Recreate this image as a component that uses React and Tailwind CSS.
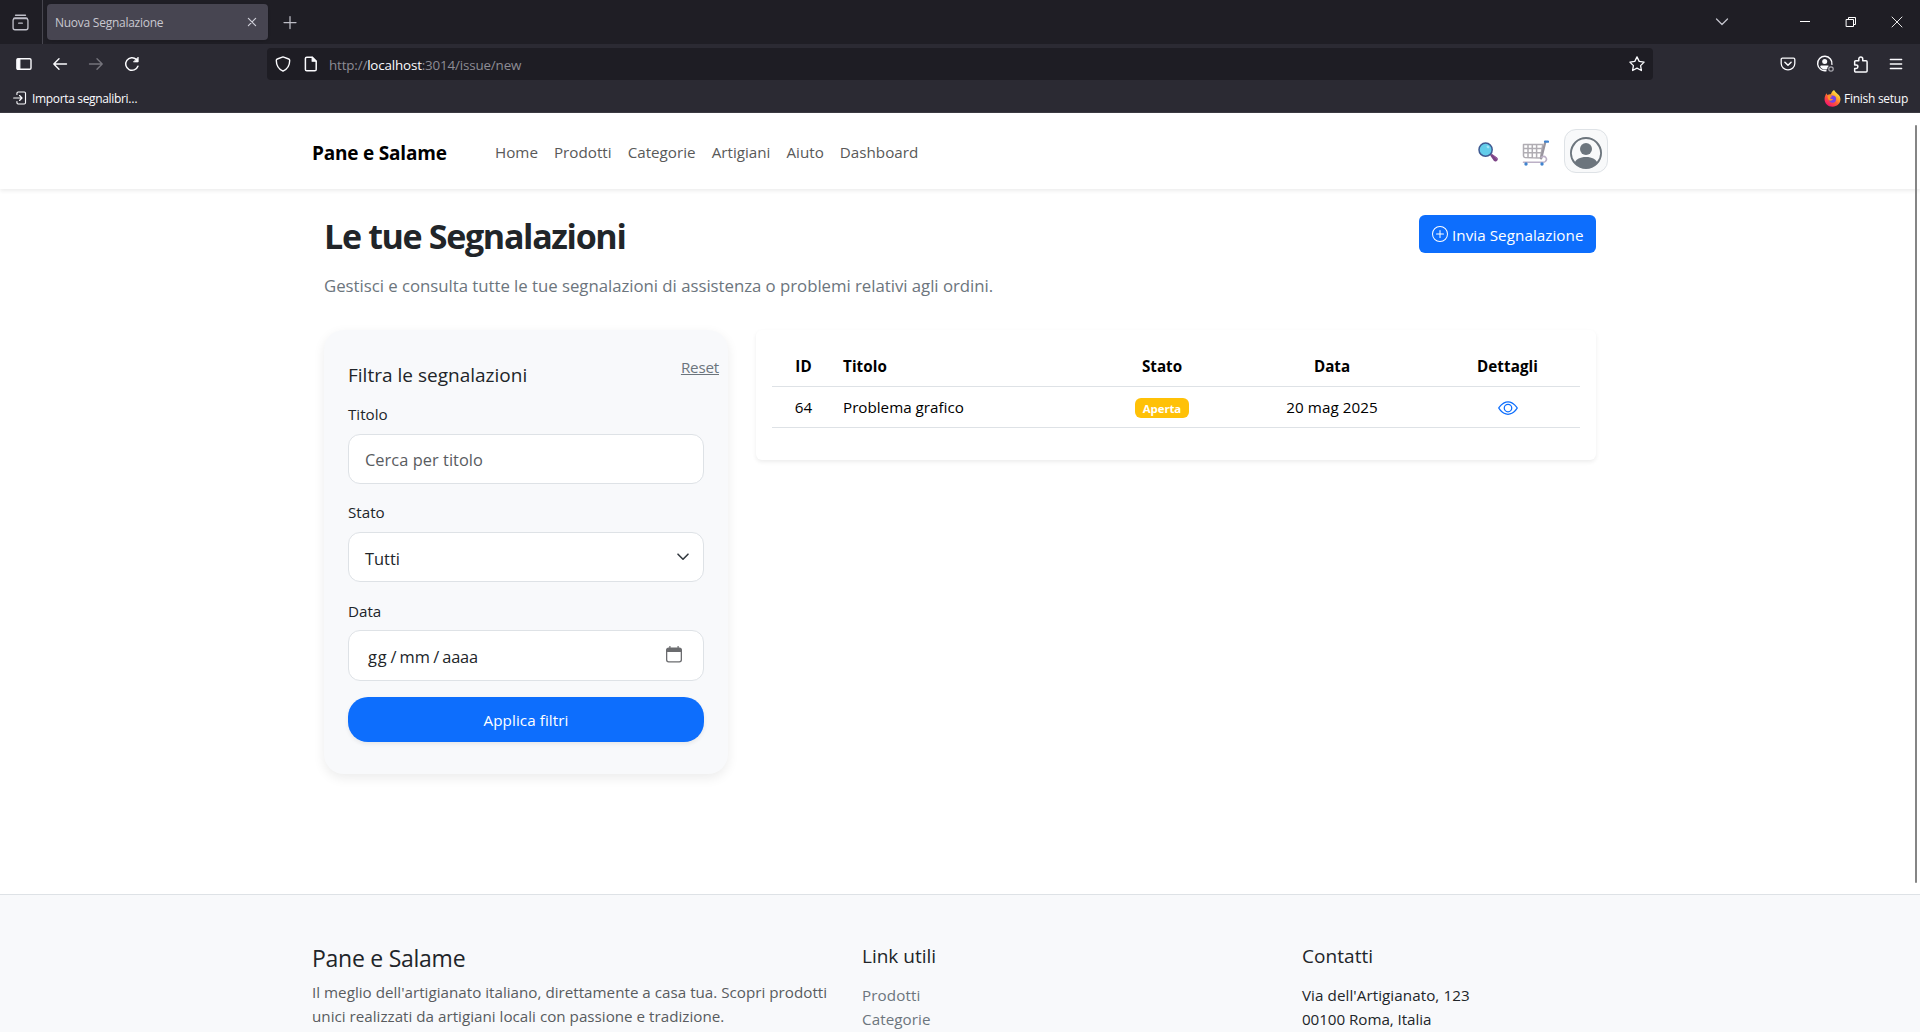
import React from "react";
import { BsEye, BsPersonCircle, BsPlusCircle } from "react-icons/bs";

function Svg({ size = 16, className = "", children }) {
  return (
    <svg
      width={size}
      height={size}
      viewBox="0 0 16 16"
      fill="none"
      stroke="currentColor"
      strokeWidth="1.25"
      strokeLinecap="round"
      strokeLinejoin="round"
      className={`block shrink-0 ${className}`}
    >
      {children}
    </svg>
  );
}

function ToolButton({ className = "text-[#fbfbfe]", children }) {
  return <button className={`flex h-8 w-9 items-center justify-center ${className}`}>{children}</button>;
}

function FirefoxLogo() {
  return (
    <svg width="17" height="17" viewBox="0 0 32 32" className="block shrink-0">
      <defs>
        <linearGradient id="flame" x1="0.85" y1="0.1" x2="0.25" y2="0.95">
          <stop offset="0" stopColor="#fff44f" />
          <stop offset="0.3" stopColor="#ffb02e" />
          <stop offset="0.6" stopColor="#ff5a36" />
          <stop offset="1" stopColor="#f5156c" />
        </linearGradient>
      </defs>
      <path
        d="M19 0c1 3 4 5 6.500 7.500C29 10 31 13.500 31 17.500 31 25.500 24.500 31.500 16 31.500S1 25.500 1 17c0-4 1.500-8 4-11 .2 1.500.8 2.500 1.500 3.200C8.500 8 11 7.500 13 8c1-3.500 3-6.500 6-8z"
        fill="url(#flame)"
      />
      <circle cx="16" cy="17" r="6.800" fill="#7542e5" />
      <path d="M7 11c3-1.500 6-.5 8 2-2 .3-3.500 1-3.500 2.500 1.500 2 4 2 5.500 1-1 4.500-8 5-9.500 0C7 14.500 6.500 12.500 7 11z" fill="#ff9328" />
    </svg>
  );
}

function TabBar() {
  return (
    <div className="flex h-11 items-center bg-[#1f1e25] text-[#bfbfc9]">
      <div className="flex h-full w-[40px] items-center justify-center">
        <Svg size={17}>
          <path d="M3.300 1.200h9.400M1.600 4.200c.2-.5.700-.6 1.300-.6h10.200c.6 0 1.100.1 1.300.6" />
          <rect x="1" y="4.300" width="14" height="10.500" rx="1.800" />
          <path d="M6.300 8.600h3.400" />
        </Svg>
      </div>
      <div className="h-full w-[3px] border-r border-[#47464f]" />
      <div className="ml-1 flex h-9 w-[221px] items-center justify-between rounded bg-[#474551] pl-2 pr-[10px] shadow-sm">
        <span className="pt-px text-[12px] leading-4 tracking-[-0.26px] text-[#c9c8d0]">Nuova Segnalazione</span>
        <Svg size={12} className="text-[#cfcfd8]">
          <path strokeWidth="1.600" d="M3.200 3.200l9.600 9.600M12.800 3.200L3.200 12.800" />
        </Svg>
      </div>
      <Svg size={16} className="ml-[13.5px] text-[#bdbdc6]">
        <path d="M8 2.500v12M2 8.500h12" />
      </Svg>
      <div className="ml-auto flex items-center">
        <Svg size={16} className="mr-[67px] text-[#c2c2cb]">
          <path strokeWidth="1.300" d="M2.500 5L8 10.500 13.500 5" />
        </Svg>
        <Svg size={16} className="mr-[30px] text-white">
          <path strokeWidth="1" strokeLinecap="butt" d="M3 7.500h10" />
        </Svg>
        <Svg size={16} className="mr-[30px] text-white">
          <path strokeWidth="1" strokeLinejoin="miter" d="M3.500 5.500h7v7h-7zM5.500 5.500v-2h7v7h-2" />
        </Svg>
        <Svg size={16} className="mr-[15px] text-white">
          <path strokeWidth="0.900" d="M3 3l10 10M13 3L3 13" />
        </Svg>
      </div>
    </div>
  );
}

function Toolbar() {
  return (
    <div className="flex h-10 items-center px-1.5">
      <ToolButton>
        <Svg>
          <rect x="1" y="2.700" width="14" height="10.600" rx="1.300" strokeWidth="1.400" />
          <path d="M1.200 3h2.600v10H1.200z" fill="currentColor" />
        </Svg>
      </ToolButton>
      <ToolButton>
        <Svg>
          <path strokeWidth="1.400" d="M14.500 8H1.800M7 2.800L1.800 8 7 13.200" />
        </Svg>
      </ToolButton>
      <ToolButton className="text-[#75747c]">
        <Svg>
          <path strokeWidth="1.400" d="M1.500 8h12.700M9 2.800L14.200 8 9 13.200" />
        </Svg>
      </ToolButton>
      <ToolButton>
        <Svg>
          <path strokeWidth="1.500" d="M13.900 10.200A6.300 6.300 0 1 1 12.300 3.400" />
          <path d="M14.200 1.500v4.400H9.800z" fill="currentColor" strokeWidth="0.800" />
        </Svg>
      </ToolButton>
      <div className="ml-[117px] flex h-8 w-[1386px] items-center rounded bg-[#1e1d24] px-2 text-[#fbfbfe]">
        <Svg>
          <path strokeWidth="1.400" d="M8 .9l5.700 2.100c.7.2 1 .7 1 1.400 0 4.500-2 8.400-6.700 10.700C3.300 12.800 1.300 8.900 1.300 4.400c0-.7.3-1.200 1-1.400z" />
        </Svg>
        <Svg className="ml-3">
          <path strokeWidth="1.500" d="M3.800 1.200h5.400l4 4v8.200a1.400 1.400 0 0 1-1.400 1.400h-8a1.400 1.400 0 0 1-1.400-1.400V2.600a1.400 1.400 0 0 1 1.400-1.400z" />
          <path d="M9.200 1.200v4h4z" fill="currentColor" />
        </Svg>
        <span className="ml-[10px] pt-[2px] text-[13.4px] leading-5 tracking-[-0.165px] text-[#8d8c94]">
          http://<span className="text-[#fbfbfe]">localhost</span>:3014/issue/new
        </span>
        <Svg className="ml-auto">
          <path strokeWidth="1.300" d="M8 .9l2.200 4.500 4.900.7-3.500 3.500.8 4.900L8 12.200l-4.400 2.300.8-4.900L.9 6.100l4.900-.7z" />
        </Svg>
      </div>
      <div className="ml-auto flex">
        <ToolButton>
          <Svg>
            <path strokeWidth="1.300" d="M2.400 2.200h11.200c.7 0 1.200.5 1.200 1.200v4.100a6.800 6.300 0 0 1-13.600 0V3.400c0-.7.500-1.200 1.200-1.200z" />
            <path strokeWidth="1.500" d="M4.900 6.300L8 9.200l3.100-2.900" />
          </Svg>
        </ToolButton>
        <ToolButton>
          <svg width="18" height="18" viewBox="0 0 18 18" fill="none" stroke="currentColor" className="ml-[2px] block shrink-0">
            <path strokeWidth="1.400" d="M15.900 9.800A7.200 7.200 0 1 0 10.500 15.500" />
            <circle cx="8.700" cy="6.500" r="2.500" fill="currentColor" stroke="none" />
            <path d="M4.200 11.700c0-.8.600-1.300 1.400-1.300h6.200c.5 0 .9.200 1.200.6-1.200.7-1.800 1.600-1.700 3-2.500 1.200-5.600.3-7.100-2.300z" fill="currentColor" stroke="none" />
            <circle cx="15" cy="14" r="2.200" strokeWidth="1.200" className="text-[#a9a8b0]" stroke="currentColor" />
          </svg>
        </ToolButton>
        <ToolButton>
          <Svg size={17}>
            <path
              strokeWidth="1.400"
              d="M2.500 6.600V5.400c0-.6.400-1 1-1h2.900V2.800a1.850 1.850 0 0 1 3.700 0v1.600h3.100c.6 0 1 .4 1 1v8.700c0 .6-.4 1-1 1H3.500c-.6 0-1-.4-1-1v-2.400h1.400a1.650 1.650 0 0 0 0-3.300H2.500z"
            />
          </Svg>
        </ToolButton>
        <ToolButton>
          <Svg>
            <path strokeWidth="1.300" d="M2.300 3.500h11.400M2.300 8h11.400M2.300 12.500h11.400" />
          </Svg>
        </ToolButton>
      </div>
    </div>
  );
}

function BookmarksBar() {
  return (
    <div className="flex h-[29px] items-center justify-between border-b border-[#3c3b43] pl-3 pr-3 text-[12px] leading-4 text-[#fbfbfe]">
      <div className="flex items-center gap-[5px]">
        <Svg size={14} className="ml-px">
          <path strokeWidth="1.300" d="M4.500 4V2.600c0-.8.600-1.400 1.400-1.400h7c.8 0 1.400.6 1.400 1.400v10.800c0 .8-.6 1.400-1.400 1.400h-7c-.8 0-1.400-.6-1.400-1.400V12" />
          <path strokeWidth="1.400" d="M.8 8h9.400M7.500 5.200L10.300 8l-2.800 2.800" />
        </Svg>
        <span className="pt-[2px] tracking-[-0.34px]">Importa segnalibri…</span>
      </div>
      <div className="flex items-center gap-[3px]">
        <FirefoxLogo />
        <span className="pt-[2px] tracking-[-0.27px]">Finish setup</span>
      </div>
    </div>
  );
}

function SearchIcon() {
  return (
    <svg width="20" height="20" viewBox="0 0 20 20" className="block">
      <path d="M12.200 13.400l1.600-1.600 5.200 3.700c1 .8 1.100 2 .3 2.900l-.6.600c-.9.800-2.100.7-2.900-.3z" fill="#7d4486" />
      <path d="M13.600 12l5 3.700c.6.500.8 1.100.5 1.800z" fill="#a15fa6" />
      <circle cx="7.600" cy="7.700" r="6.600" fill="#63cdea" stroke="#3f5a92" strokeWidth="1.500" />
      <ellipse cx="10" cy="4.900" rx="1.500" ry="1.200" fill="#a5e6f7" transform="rotate(35 10 4.900)" />
    </svg>
  );
}

function CartIcon() {
  return (
    <svg width="27" height="26" viewBox="0 0 27 26" fill="none" className="block">
      <path
        d="M1.500 4.500h19.300L18.500 18 3 17.500c-1-.1-1.400-.6-1.500-1.500z M1.500 8.500h18.700M1.600 12.800h18M6 4.500v13M10.300 4.500v13M14.600 4.500v13.300"
        stroke="#b0adb3"
        strokeWidth="1.500"
        strokeLinejoin="round"
      />
      <path d="M23.300 2L19.200 18.300" stroke="#99959e" strokeWidth="2.300" strokeLinecap="round" />
      <path d="M19.300 17.300c3.800-2.500 6.800 1.600 4 4.200-.7.600-1.500.8-2.500.8H1.500" stroke="#bcb0c6" strokeWidth="1.600" strokeLinecap="round" />
      <path d="M23 1.600h3" stroke="#3f83cf" strokeWidth="2.200" strokeLinecap="round" />
      <circle cx="4" cy="24" r="1.700" fill="#3f83cf" />
      <circle cx="20" cy="24" r="1.700" fill="#3f83cf" />
    </svg>
  );
}

function Navbar() {
  const links = ["Home", "Prodotti", "Categorie", "Artigiani", "Aiuto", "Dashboard"];
  return (
    <header className="relative h-[76px] shrink-0 bg-white shadow-[0_2px_4px_rgba(0,0,0,0.075)]">
      <div className="mx-auto flex h-full w-[1320px] items-center px-3">
        <a className="w-[183px] pt-[3px] text-[19px] font-bold leading-[30px] tracking-[-0.2px] text-black">Pane e Salame</a>
        <nav className="flex gap-4 pt-px text-[15.2px] leading-6 tracking-[0.01px] text-[#595959]">
          {links.map((label) => (
            <a key={label}>{label}</a>
          ))}
        </nav>
        <div className="ml-auto flex items-center">
          <div className="pt-[2px]">
            <SearchIcon />
          </div>
          <div className="ml-6 mr-[15px] pt-[3px]">
            <CartIcon />
          </div>
          <button className="flex h-11 w-11 items-center justify-center rounded-xl border border-[#dee2e6] bg-[#f8f9fa] pt-1 text-[#6c757d]">
            <BsPersonCircle size={32} />
          </button>
        </div>
      </div>
    </header>
  );
}

function Label({ className = "mb-2", children }) {
  return <label className={`block text-[15.2px] leading-6 ${className}`}>{children}</label>;
}

function FilterCard() {
  return (
    <aside className="w-[404px] rounded-[20px] bg-[#f8f9fb] px-6 pb-8 pt-[33px] shadow-[0_4px_12px_rgba(0,0,0,0.08)]">
      <div className="mb-[15px] flex h-6 items-start justify-between">
        <h2 className="text-[19px] leading-6 tracking-[0.01px]">Filtra le segnalazioni</h2>
        <a className="-mr-[15px] -mt-2 text-[15.2px] leading-6 tracking-[-0.2px] text-[#6c757d] underline">Reset</a>
      </div>
      <Label>Titolo</Label>
      <div className="mb-4 flex h-[50px] items-center rounded-xl border border-[#dee2e6] bg-white px-4 pt-[3px] text-[16.4px] tracking-[0.04px] text-[#595c5f]">
        Cerca per titolo
      </div>
      <Label>Stato</Label>
      <div className="mb-[17px] flex h-[50px] items-center justify-between rounded-xl border border-[#dee2e6] bg-white pl-4 pr-3">
        <span className="pt-[4px] text-[16.4px]">Tutti</span>
        <Svg size={16} className="text-[#343a40]">
          <path strokeWidth="1.600" d="M3 5.200l5 5 5-5" />
        </Svg>
      </div>
      <Label className="mb-[7px]">Data</Label>
      <div className="flex h-[51px] items-center justify-between rounded-xl border border-[#dee2e6] bg-white pl-[19px] pr-[21px]">
        <div className="flex gap-[3px] pt-[4px] text-[16.4px]">
          <span className="tracking-[0.8px]">gg</span>
          <span>/</span>
          <span className="tracking-[0.2px]">mm</span>
          <span>/</span>
          <span className="tracking-[-0.15px]">aaaa</span>
        </div>
        <svg width="16" height="17" viewBox="0 0 16 17" className="mb-[3px] block text-[#6b6c6f]">
          <path d="M3.300 0h1.200v3H3.300zM11.500 0h1.200v3h-1.200z" fill="currentColor" />
          <rect x=".65" y="2.200" width="14.700" height="13.600" rx="2" fill="none" stroke="currentColor" strokeWidth="1.300" />
          <path d="M.7 4c0-1.200.8-1.900 2-1.900h10.600c1.200 0 2 .7 2 1.900v2H.7z" fill="currentColor" />
        </svg>
      </div>
      <button className="mt-4 flex h-[45px] w-full items-center justify-center rounded-[20px] bg-[#0d6efd] pt-[2px] text-[15.2px] tracking-[0.08px] text-white shadow-[0_2px_4px_rgba(0,0,0,0.075)]">
        Applica filtri
      </button>
    </aside>
  );
}

function IssuesTable() {
  const cols = "grid grid-cols-[63px_260px_134px_206px_145px] h-[41px] items-center border-b border-[#dee2e6] text-center text-[15.2px] leading-6 text-black";
  return (
    <section className="h-[130px] w-[840px] rounded-md bg-white p-4 shadow-[0_2px_4px_rgba(0,0,0,0.075)]">
      <div className={`${cols} font-bold`}>
        <span>ID</span>
        <span className="px-2 text-left tracking-[0.08px]">Titolo</span>
        <span>Stato</span>
        <span>Data</span>
        <span className="tracking-[0.08px]">Dettagli</span>
      </div>
      <div className={cols}>
        <span>64</span>
        <span className="px-2 text-left">Problema grafico</span>
        <span className="flex justify-center pt-[2px]">
          <span className="flex h-5 w-[54px] items-center justify-center rounded-md bg-[#ffc107] pt-px text-[11.4px] font-bold leading-none tracking-[-0.08px] text-white">
            Aperta
          </span>
        </span>
        <span className="tracking-[0.08px]">20 mag 2025</span>
        <span className="flex justify-center pt-[2px] text-[#0d6efd]">
          <BsEye size={20} />
        </span>
      </div>
    </section>
  );
}

function Footer() {
  return (
    <footer className="flex-1 overflow-hidden border-t border-[#dee2e6] bg-[#f8f9fb] pt-[49px]">
      <div className="mx-auto flex w-[1320px] pl-3 text-[15.2px] leading-6">
        <div className="w-[550px]">
          <h3 className="mb-[7px] text-[23px] leading-[29px] tracking-[-0.26px]">Pane e Salame</h3>
          <p className="whitespace-nowrap tracking-[0.005px] text-[#595c5f]">
            Il meglio dell'artigianato italiano, direttamente a casa tua. Scopri prodotti
            <br />
            unici realizzati da artigiani locali con passione e tradizione.
          </p>
        </div>
        <div className="w-[440px]">
          <h3 className="mb-[15px] text-[19px] leading-6">Link utili</h3>
          <ul className="text-[#6c757d]">
            <li className="tracking-[0.1px]">Prodotti</li>
            <li className="tracking-[0.08px]">Categorie</li>
          </ul>
        </div>
        <div>
          <h3 className="mb-[15px] text-[19px] leading-6 tracking-[0.05px]">Contatti</h3>
          <p className="tracking-[0.07px]">Via dell'Artigianato, 123</p>
          <p className="tracking-[-0.06px]">00100 Roma, Italia</p>
        </div>
      </div>
    </footer>
  );
}

export default function App() {
  return (
    <div className="relative flex h-[1032px] w-[1920px] flex-col overflow-hidden bg-white font-['Open_Sans','Noto_Sans',sans-serif] text-[#212529]">
      <div className="h-[113px] shrink-0 bg-[#2b2a33]">
        <TabBar />
        <Toolbar />
        <BookmarksBar />
      </div>
      <Navbar />
      <main className="mx-auto h-[705px] w-[1320px] shrink-0 px-6 pt-[26px]">
        <div className="flex items-start justify-between">
          <h1 className="text-[34px] font-bold leading-[42px] tracking-[-1.33px]">Le tue Segnalazioni</h1>
          <button className="flex h-[38px] w-[177px] items-center gap-1 rounded-md bg-[#0d6efd] pl-[13px] text-[15.2px] tracking-[0.06px] text-white">
            <BsPlusCircle size={16} />
            <span className="whitespace-nowrap pt-[2px]">Invia Segnalazione</span>
          </button>
        </div>
        <p className="mt-4 text-[16.8px] leading-[26px] tracking-[-0.03px] text-[#6c757d]">
          Gestisci e consulta tutte le tue segnalazioni di assistenza o problemi relativi agli ordini.
        </p>
        <div className="mt-[31px] flex items-start gap-7">
          <FilterCard />
          <IssuesTable />
        </div>
      </main>
      <Footer />
      <div className="absolute right-[3px] top-[125px] h-[758px] w-[2px] rounded-full bg-[#858585]" />
    </div>
  );
}
